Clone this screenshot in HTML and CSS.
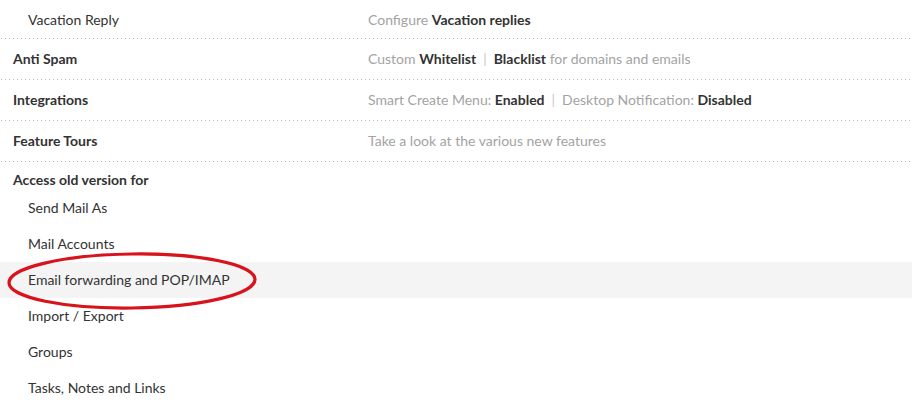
FILE: index.html
```html
<!DOCTYPE html>
<html>
<head>
<meta charset="utf-8">
<link rel="stylesheet" href="styles.css">
</head>
<body>
<div class="settings">
  <div class="row first">
    <div class="label sub">Vacation Reply</div>
    <div class="desc">Configure <b>Vacation replies</b></div>
  </div>
  <div class="row">
    <div class="label">Anti Spam</div>
    <div class="desc">Custom <b>Whitelist</b><span class="sep">|</span><b>Blacklist</b> for domains and emails</div>
  </div>
  <div class="row">
    <div class="label">Integrations</div>
    <div class="desc">Smart Create Menu: <b>Enabled</b><span class="sep">|</span>Desktop Notification: <b>Disabled</b></div>
  </div>
  <div class="row">
    <div class="label">Feature Tours</div>
    <div class="desc">Take a look at the various new features</div>
  </div>
  <div class="group-title">Access old version for</div>
  <ul class="old-list">
    <li class="item">Send Mail As</li>
    <li class="item">Mail Accounts</li>
    <li class="item active">Email forwarding and POP/IMAP
      <svg class="circle" width="254" height="62" viewBox="0 0 254 62">
        <ellipse cx="127" cy="31" rx="123" ry="27" fill="none" stroke="#d8131c" stroke-width="3.2" transform="rotate(-0.8 127 31)"/>
      </svg>
    </li>
    <li class="item">Import / Export</li>
    <li class="item">Groups</li>
    <li class="item">Tasks, Notes and Links</li>
  </ul>
</div>
</body>
</html>
```

FILE: styles.css
```css
html, body {
  margin: 0;
  padding: 0;
  background: #fff;
}
body {
  font-family: Lato, "Open Sans", sans-serif;
  font-size: 14px;
  color: #333;
  overflow: hidden;
}
.settings {
  width: 912px;
}
.row {
  display: flex;
  align-items: center;
  height: 38px;
  background-image: linear-gradient(to right, #b8b8b8 1px, transparent 1px);
  background-size: 4px 1px;
  background-repeat: repeat-x;
  background-position: 1px bottom;
  padding-bottom: 3px;
}
.row.first {
  margin-top: -2px;
  padding-top: 4px;
  height: 34px;
}
.label {
  box-sizing: border-box;
  width: 368px;
  flex: none;
  padding-left: 13px;
  font-weight: bold;
  color: #333;
}
.label.sub {
  padding-left: 28px;
  font-weight: normal;
}
.desc {
  color: #a3a3a3;
}
.desc b {
  color: #333;
}
.sep {
  color: #c8c8c8;
  margin: 0 7px;
}
.group-title {
  font-weight: bold;
  padding: 9px 0 0 13px;
  height: 19px;
  line-height: 17px;
}
.old-list {
  list-style: none;
  margin: 0;
  padding: 0;
}
.item {
  position: relative;
  height: 36px;
  line-height: 36px;
  padding-left: 28px;
}
.item.active {
  background: #f4f4f4;
}
.circle {
  position: absolute;
  left: 5px;
  top: -12px;
}
```
